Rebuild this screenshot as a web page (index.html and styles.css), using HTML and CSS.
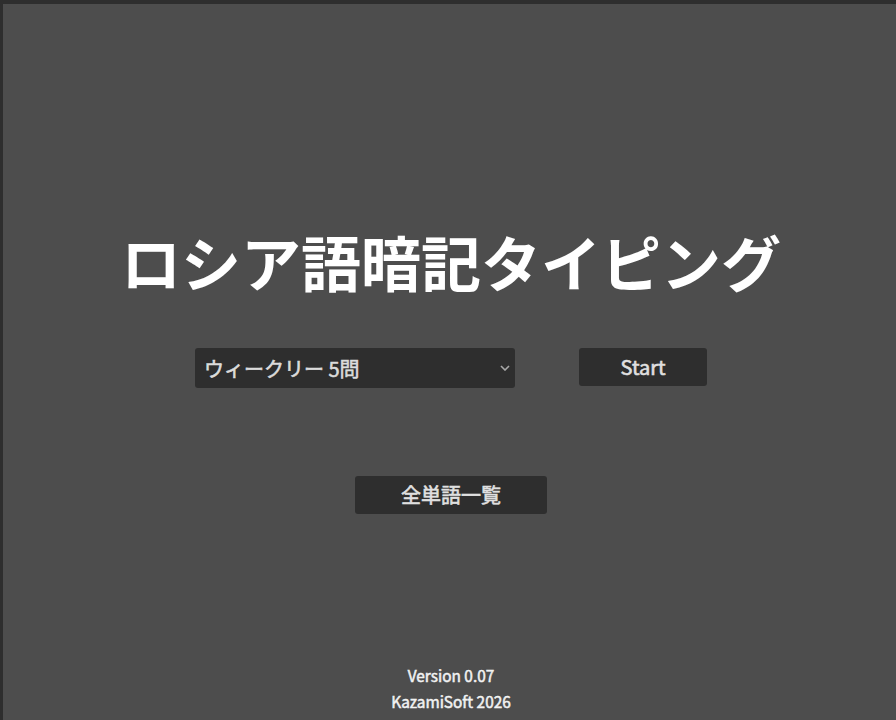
FILE: index.html
```html
<!DOCTYPE html>
<html lang="ja">
<head>
<meta charset="utf-8">
<title>ロシア語暗記タイピング</title>
<link rel="stylesheet" href="styles.css">
</head>
<body>
<div class="app">
  <main class="main">
    <h1 class="title">ロシア語暗記タイピング</h1>
    <div class="controls">
      <div class="select-wrap">
        <select class="mode">
          <option>ウィークリー 5問</option>
          <option>ウィークリー 10問</option>
          <option>全単語</option>
        </select>
        <svg class="chev" width="10" height="6" viewBox="0 0 10 6"><path d="M1 1 L5 5 L9 1" fill="none" stroke="#a8a8a8" stroke-width="1.6"/></svg>
      </div>
      <button class="btn start">Start</button>
    </div>
    <button class="btn list">全単語一覧</button>
  </main>
  <footer class="footer">
    <div>Version 0.07</div>
    <div>KazamiSoft 2026</div>
  </footer>
</div>
</body>
</html>
```
FILE: styles.css
```css
html, body {
  margin: 0;
  padding: 0;
  overflow: hidden;
}
body {
  background: #2e2e2e;
  font-family: "Noto Sans CJK JP", "Noto Sans", sans-serif;
  color: #e6e6e6;
}
.app {
  margin: 4px 0 0 3px;
  width: 896px;
  height: 716px;
  background: #4d4d4d;
  display: flex;
  flex-direction: column;
  align-items: center;
}
.main {
  display: flex;
  flex-direction: column;
  align-items: center;
  flex: 1;
}
.title {
  margin: 221px 0 0;
  font-size: 60px;
  line-height: 72px;
  font-weight: 700;
  color: #ffffff;
  letter-spacing: 0;
}
.controls {
  display: flex;
  align-items: flex-start;
  gap: 64px;
  margin-top: 51px;
}
.select-wrap {
  position: relative;
  width: 320px;
  height: 40px;
}
.mode {
  appearance: none;
  -webkit-appearance: none;
  width: 320px;
  height: 40px;
  background: #2e2e2e;
  color: #dcdcdc;
  border: none;
  border-radius: 3px;
  font-family: inherit;
  font-size: 20px;
  font-weight: 400;
  -webkit-text-stroke: 0.6px #dcdcdc;
  padding: 0 0 0 9px;
  margin: 0;
  outline: none;
}
.chev {
  position: absolute;
  right: 5px;
  top: 17px;
  pointer-events: none;
}
.btn {
  background: #2e2e2e;
  color: #e0e0e0;
  border: none;
  border-radius: 3px;
  font-family: inherit;
  font-size: 20px;
  font-weight: 400;
  -webkit-text-stroke: 0.6px #e0e0e0;
  height: 38px;
  padding: 0;
  margin: 0;
  line-height: 38px;
}
.start {
  width: 128px;
}
.list {
  width: 192px;
  margin-top: 88px;
}
.footer {
  text-align: center;
  font-size: 15.4px;
  font-weight: 400;
  -webkit-text-stroke: 0.5px #f2f2f2;
  line-height: 26px;
  color: #f2f2f2;
  padding-bottom: 6px;
}
```
